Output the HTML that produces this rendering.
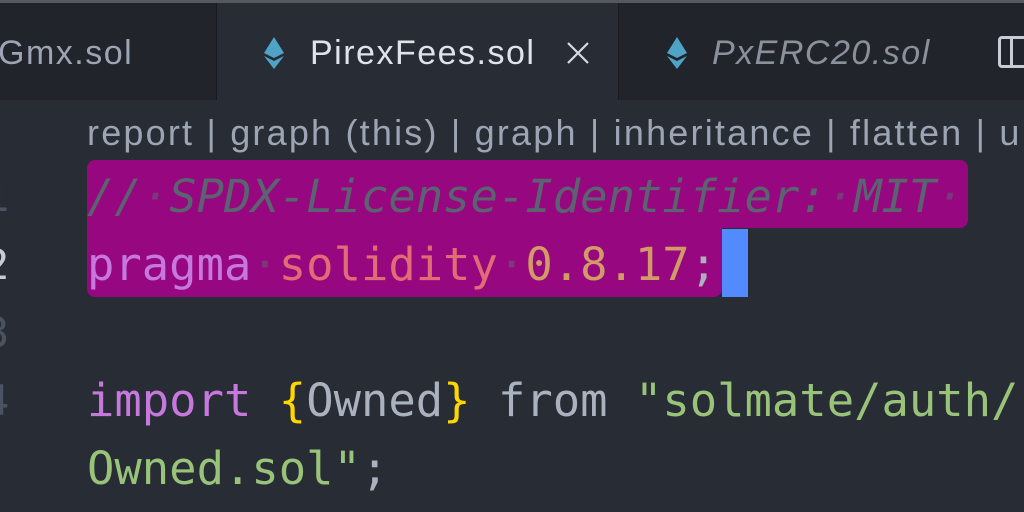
<!DOCTYPE html>
<html><head><style>
body{margin:0;width:1024px;height:512px;overflow:hidden;background:#282c34;position:relative;font-family:"Liberation Sans",sans-serif}
.tabs{position:absolute;left:0;top:0;width:1024px;height:100px;background:#21252b;border-top:3px solid #55585e;box-sizing:border-box}
.tab{position:absolute;top:0;height:97px;font-size:34px;letter-spacing:1.5px;line-height:100px;color:#9da5b4;white-space:nowrap}
.div{position:absolute;top:0;width:1px;height:97px;background:#181a1f}
.code{position:absolute;font-family:"DejaVu Sans Mono","Liberation Mono",monospace;font-size:45.5px;white-space:pre;line-height:68px;margin-top:3px}
.ln{position:absolute;font-family:"DejaVu Sans Mono",monospace;font-size:42px;color:#4b5363;line-height:68px;margin-top:3px}
.d{color:#7a3a78}
</style></head><body>
<div class="tabs">
 <div class="tab" style="left:-2px">Gmx.sol</div>
 <div class="div" style="left:216px"></div>
 <div style="position:absolute;left:217px;top:0;width:401px;height:100px;background:#282c34"></div>
 <svg style="position:absolute;left:264px;top:34px" width="20" height="32" viewBox="0 0 20 32"><path d="M10 0L20 16L10 21L0 16Z" fill="#4fa3c6"/><path d="M0 19L10 24L20 19L10 32Z" fill="#4fa3c6"/></svg>
 <div class="tab" style="left:310px;color:#dfe3ea">PirexFees.sol</div>
 <svg style="position:absolute;left:566px;top:38px" width="24" height="24"><path d="M2 2L22 22M22 2L2 22" stroke="#d7dae0" stroke-width="2.2"/></svg>
 <div class="div" style="left:618px"></div>
 <svg style="position:absolute;left:667px;top:34px" width="20" height="32" viewBox="0 0 20 32"><path d="M10 0L20 16L10 21L0 16Z" fill="#4fa3c6"/><path d="M0 19L10 24L20 19L10 32Z" fill="#4fa3c6"/></svg>
 <div class="tab" style="left:712px;font-style:italic;color:#8b919c">PxERC20.sol</div>
 <div style="position:absolute;left:998px;top:33px;width:40px;height:32px;border:3px solid #c8ccd4;border-radius:4px;box-sizing:border-box"></div>
 <div style="position:absolute;left:1010px;top:33px;width:3px;height:32px;background:#c8ccd4"></div>
</div>
<div style="position:absolute;left:87px;top:110px;font-size:36px;letter-spacing:2.2px;color:#9da5b4;line-height:46px;white-space:nowrap">report | graph (this) | graph | inheritance | flatten | u</div>
<div style="position:absolute;left:87px;top:160px;width:881px;height:68px;background:#97077f;border-radius:8px 8px 8px 0"></div>
<div style="position:absolute;left:87px;top:228px;width:635px;height:69px;background:#97077f;border-radius:0 0 8px 8px"></div>
<div style="position:absolute;left:722px;top:229px;width:26px;height:68px;background:#528bff"></div>
<div class="ln" style="left:-16px;top:160px">1</div>
<div class="ln" style="left:-16px;top:228px;color:#c8ccd4">2</div>
<div class="ln" style="left:-16px;top:296px">3</div>
<div class="ln" style="left:-16px;top:364px">4</div>
<div class="code" style="left:87px;top:160px;color:#5c6370;font-style:italic">//<span class="d">·</span>SPDX-License-Identifier:<span class="d">·</span>MIT<span class="d">·</span></div>
<div class="code" style="left:87px;top:228px"><span style="color:#c678dd">pragma</span><span class="d">·</span><span style="color:#e06c75">solidity</span><span class="d">·</span><span style="color:#d19a66">0.8.17</span><span style="color:#abb2bf">;</span></div>
<div class="code" style="left:87px;top:364px;color:#abb2bf"><span style="color:#c678dd">import</span> <span style="color:#ffd700">{</span>Owned<span style="color:#ffd700">}</span> from <span style="color:#98c379">"solmate/auth/</span></div>
<div class="code" style="left:87px;top:432px;color:#abb2bf"><span style="color:#98c379">Owned.sol"</span>;</div>
</body></html>
